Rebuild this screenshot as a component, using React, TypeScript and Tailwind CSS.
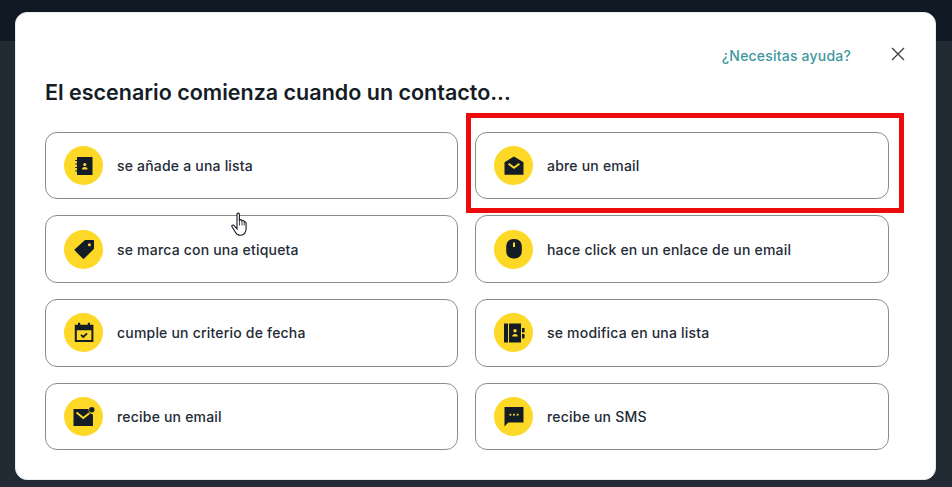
const ink = "#141c26";
const gold = "#fdd826";

function BookIcon() {
  return (
    <svg viewBox="0 0 24 24" className="h-6 w-6">
      <rect x="5" y="3" width="15.5" height="18" fill={ink} />
      <path d="M3.2 6.5h3M3.2 10h3M3.2 13.5h3M3.2 17h3" stroke={ink} strokeWidth="1.2" fill="none" />
      <circle cx="12.800" cy="10.500" r="1.600" fill={gold} />
      <path d="M10 15.500c0-1.600 1.400-2.400 2.800-2.400s2.800.8 2.800 2.400z" fill={gold} />
    </svg>
  );
}

function TagIcon() {
  return (
    <svg viewBox="0 0 24 24" className="h-6 w-6">
      <path
        fillRule="evenodd"
        d="M2.800 12.200 13 3h8c.6 0 1 .4 1 1v7.800L12.200 21.600c-.4.4-1 .4-1.400 0L2.800 13.600c-.4-.4-.4-1 0-1.400zM17.400 9.200a1.500 1.500 0 1 0 0-3 1.500 1.500 0 0 0 0 3z"
        fill={ink}
      />
    </svg>
  );
}

function CalendarIcon() {
  return (
    <svg viewBox="0 0 24 24" className="h-6 w-6">
      <path
        fillRule="evenodd"
        d="M6 1.800h2.200v2h7.600v-2H18v2h3.400V21H2.800V3.800H6zM4.800 9.200V19h14.600V9.200z"
        fill={ink}
      />
      <path d="m9 13.800 2.200 2.100 3.900-3.600" stroke={ink} strokeWidth="1.800" fill="none" />
    </svg>
  );
}

function OpenMailIcon() {
  return (
    <svg viewBox="0 0 24 24" className="h-6 w-6">
      <path d="M2.500 8.200 12 2.500l9.500 5.700v12.500h-19z" fill={ink} />
      <path d="m6.600 9.800 5.400 4 5.400-4" stroke={gold} strokeWidth="2" fill="none" />
    </svg>
  );
}

function MouseIcon() {
  return (
    <svg viewBox="0 0 24 24" className="h-6 w-6">
      <rect x="4.200" y="2" width="15.600" height="19.500" rx="7" fill={ink} />
      <rect x="11" y="5.500" width="2" height="4.500" fill={gold} />
    </svg>
  );
}

function ContactEditIcon() {
  return (
    <svg viewBox="0 0 24 24" className="h-6 w-6">
      <rect x="2" y="2.500" width="4" height="19" fill={ink} />
      <rect x="7" y="2.500" width="12" height="19" fill={ink} />
      <rect x="20" y="7" width="2.600" height="4.400" fill={ink} />
      <rect x="20" y="13" width="2.600" height="4.400" fill={ink} />
      <circle cx="13" cy="9.800" r="1.700" fill={gold} />
      <path d="M10.100 15.500c0-1.600 1.500-2.500 2.900-2.500s2.900.9 2.900 2.500z" fill={gold} />
    </svg>
  );
}

function UnreadMailIcon() {
  return (
    <svg viewBox="0 0 24 24" className="h-6 w-6">
      <path d="M1.500 4h15a5.500 5.500 0 0 0 4.500 5.500V21h-19.500z" fill={ink} />
      <path d="m4.500 7.500 6.800 5.500 6-4.800" stroke={gold} strokeWidth="2" fill="none" />
      <circle cx="19.800" cy="4.800" r="2.700" fill={ink} />
    </svg>
  );
}

function SmsIcon() {
  return (
    <svg viewBox="0 0 24 24" className="h-6 w-6">
      <path d="M2.500 2h19v15.500H6.300L2.500 21.500z" fill={ink} />
      <rect x="7.500" y="8.800" width="1.800" height="1.800" fill={gold} />
      <rect x="11.100" y="8.800" width="1.800" height="1.800" fill={gold} />
      <rect x="14.700" y="8.800" width="1.800" height="1.800" fill={gold} />
    </svg>
  );
}

const options = [
  { label: "se añade a una lista", icon: <BookIcon /> },
  { label: "abre un email", icon: <OpenMailIcon /> },
  { label: "se marca con una etiqueta", icon: <TagIcon /> },
  { label: "hace click en un enlace de un email", icon: <MouseIcon /> },
  { label: "cumple un criterio de fecha", icon: <CalendarIcon /> },
  { label: "se modifica en una lista", icon: <ContactEditIcon /> },
  { label: "recibe un email", icon: <UnreadMailIcon /> },
  { label: "recibe un SMS", icon: <SmsIcon /> },
];

function OptionCard({ label, icon }: { label: string; icon: React.ReactNode }) {
  return (
    <div className="flex h-[67.67px] items-center gap-[14px] rounded-[12px] border border-[#8c8c8c] bg-white pl-[18px]">
      <span className="flex h-[39px] w-[39px] items-center justify-center rounded-full bg-[#fdd826]">
        {icon}
      </span>
      <span className="text-[14px] font-medium tracking-[0.2px] text-[#232b36]">{label}</span>
    </div>
  );
}

export default function App() {
  return (
    <div className="relative h-[487px] w-[952px] overflow-hidden bg-[#222a34] font-['Inter',sans-serif]">
      <div className="h-[41px] bg-[#111a24]" />

      <div className="absolute left-[15px] top-[12px] h-[468px] w-[921px] rounded-[12px] border border-[#e6ebf1] bg-white pl-[29px] pt-[31px]">
        <div className="flex h-[22px] items-center justify-end">
          <a className="mr-[40px] text-[14px] font-medium tracking-[0.2px] text-[#3f989e]">¿Necesitas ayuda?</a>
          <svg viewBox="0 0 14 14" className="mb-[2px] mr-[30px] h-[14px] w-[14px]">
            <path d="M1 1l12 12M13 1 1 13" stroke="#3a3f46" strokeWidth="1.3" fill="none" />
          </svg>
        </div>
        <h1 className="mt-[12px] text-[21.5px] font-semibold leading-[28px] text-[#141c26]">
          El escenario comienza cuando un contacto...
        </h1>
        <div className="mt-[25.8px] grid w-[844px] grid-cols-[413px_414px] gap-x-[17px] gap-y-[16px]">
          {options.map((option) => (
            <OptionCard key={option.label} label={option.label} icon={option.icon} />
          ))}
        </div>
      </div>

      {/* red highlight drawn over the screenshot */}
      <div className="absolute left-[466px] top-[113px] h-[100px] w-[438px] border-[5px] border-[#ee0b0b]" />

      {/* mouse pointer */}
      <svg viewBox="0 0 18 26" className="absolute left-[231px] top-[212px] h-[26px] w-[18px]">
        <path
          d="M6 2.200c0-1.500 2.400-1.500 2.400 0v7.200l.2-1c.3-1.200 2.200-1 2.200.3v1l.2-.6c.4-1 2.100-.8 2.100.4v.9c.4-.8 2-.6 2 .5v5.600c0 3.200-1.800 6.800-5.400 6.800-3 0-4.400-1.400-5.600-3.600L1 14.800c-.7-1.300.9-2.400 2-1.200l3 3.200z"
          fill="#fff"
          stroke="#141c26"
          strokeWidth="1.100"
        />
        <path d="M8.500 9.500v4M11 10v3.500M13.200 10.500v3" stroke="#141c26" strokeWidth="0.800" fill="none" />
      </svg>
    </div>
  );
}
